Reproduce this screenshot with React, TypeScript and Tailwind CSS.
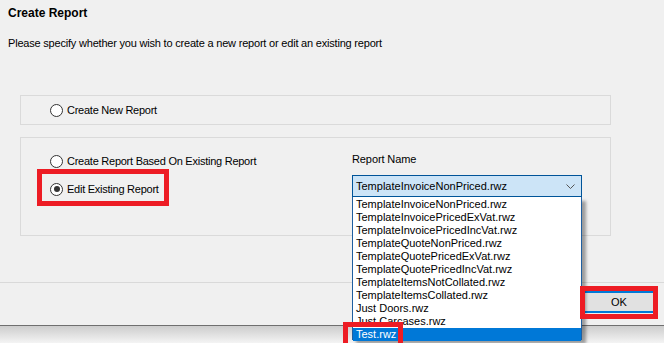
import React from "react";

const items = [
  "TemplateInvoiceNonPriced.rwz",
  "TemplateInvoicePricedExVat.rwz",
  "TemplateInvoicePricedIncVat.rwz",
  "TemplateQuoteNonPriced.rwz",
  "TemplateQuotePricedExVat.rwz",
  "TemplateQuotePricedIncVat.rwz",
  "TemplateItemsNotCollated.rwz",
  "TemplateItemsCollated.rwz",
  "Just Doors.rwz",
  "Just Carcases.rwz",
  "Test.rwz",
];

function Radio({ label, checked }: { label: string; checked?: boolean }) {
  return (
    <div className="flex items-center gap-[4px] h-[14px]">
      <span className="w-[13px] h-[13px] rounded-full border border-[#333333] bg-white flex items-center justify-center">
        {checked && <span className="w-[6px] h-[6px] rounded-full bg-[#333333]" />}
      </span>
      <span className="tracking-[-0.25px]">{label}</span>
    </div>
  );
}

export default function App() {
  return (
    <div
      className="relative w-[664px] h-[343px] overflow-hidden bg-[#f0f0f0] text-[11px] text-black leading-[13px]"
      style={{ fontFamily: '"Liberation Sans", Arial, sans-serif' }}
    >
      {/* Header */}
      <div className="pl-[8px] pt-[7px] font-bold text-[12px]">Create Report</div>
      <div className="pl-[8px] mt-[17px] tracking-[-0.2px]">
        Please specify whether you wish to create a new report or edit an existing report
      </div>

      {/* Option groups */}
      <div className="pl-[20px] mt-[45px] w-[611px]">
        <div className="h-[30px] border border-[#dadada] flex items-center pl-[29px]">
          <Radio label="Create New Report" />
        </div>

        <div className="h-[99px] mt-[12px] border border-[#dadada] flex pl-[29px] pt-[15px]">
          <div className="w-[302px] flex flex-col gap-[14px] pt-[1px]">
            <Radio label="Create Report Based On Existing Report" />
            <Radio label="Edit Existing Report" checked />
          </div>
          <div className="flex flex-col">
            <div className="h-[14px] tracking-[-0.1px]">Report Name</div>
            <div className="mt-[8px] w-[230px] h-[22px] bg-[#cce4f7] border border-[#005499] flex items-center justify-between pl-[3px] pr-[6px]">
              <span>TemplateInvoiceNonPriced.rwz</span>
              <svg width="9" height="5" viewBox="0 0 9 5">
                <path d="M0.5 0.5 L4.5 4.5 L8.5 0.5" fill="none" stroke="#555" strokeWidth="1" />
              </svg>
            </div>
          </div>
        </div>
      </div>

      {/* Footer */}
      <div className="mt-[46px] border-t border-[#d9d9d9] h-[43px] flex justify-end items-start pt-[8px] pr-[11px]">
        <button className="w-[68px] h-[22px] bg-[#e1e1e1] border-y-2 border-[#0078d7] flex items-center justify-center">
          OK
        </button>
      </div>
      <div className="h-[1px] bg-[#6f6f6f]" />
      <div className="h-[17px] bg-gradient-to-b from-[#cdcdcd] to-[#f4f4f4]" />

      {/* Open dropdown list */}
      <div className="absolute left-[352px] top-[197px] w-[230px] h-[143px] bg-white border border-[#1f5fa0] border-t-0 shadow-[4px_4px_3px_rgba(0,0,0,0.35)] pt-[1px]">
        {items.map((it) => (
          <div
            key={it}
            className={
              it === "Test.rwz"
                ? "h-[13px] bg-[#0078d7] text-white pl-[3px]"
                : "h-[13px] pl-[3px]"
            }
          >
            {it}
          </div>
        ))}
      </div>

      {/* Annotation boxes */}
      <div className="absolute left-[37px] top-[169px] w-[132px] h-[37px] border-[5px] border-[#ed1c24]" />
      <div className="absolute left-[343px] top-[322px] w-[60px] h-[26px] border-[5px] border-[#ed1c24]" />
      <div className="absolute left-[580px] top-[286px] w-[78px] h-[33px] border-[5px] border-[#ed1c24]" />
    </div>
  );
}
